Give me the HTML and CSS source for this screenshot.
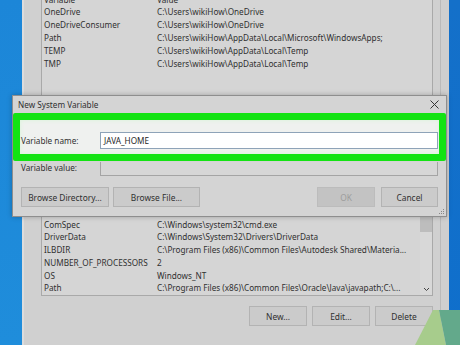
FILE: index.html
```html
<!DOCTYPE html>
<html lang="en">

<head>
    <meta charset="UTF-8">
    <meta name="viewport" content="width=device-width, initial-scale=1.0">
    <title>New System Variable</title>
    <link rel="stylesheet" href="styles.css">
</head>

<body>
    <div class="screen">
        <div class="desk-left"></div>

        <!-- Environment Variables window behind the dialog -->
        <div class="env-window">
            <div class="var-list top-list">
                <div class="row"><span class="name">Variable</span><span class="value">Value</span></div>
                <div class="row"><span class="name">OneDrive</span><span class="value">C:\Users\wikiHow\OneDrive</span></div>
                <div class="row"><span class="name">OneDriveConsumer</span><span class="value">C:\Users\wikiHow\OneDrive</span></div>
                <div class="row"><span class="name">Path</span><span class="value">C:\Users\wikiHow\AppData\Local\Microsoft\WindowsApps;</span></div>
                <div class="row"><span class="name">TEMP</span><span class="value">C:\Users\wikiHow\AppData\Local\Temp</span></div>
                <div class="row"><span class="name">TMP</span><span class="value">C:\Users\wikiHow\AppData\Local\Temp</span></div>
            </div>

            <div class="var-list bottom-list">
                <div class="rows">
                    <div class="row"><span class="name">ComSpec</span><span class="value">C:\Windows\system32\cmd.exe</span></div>
                    <div class="row"><span class="name">DriverData</span><span class="value">C:\Windows\System32\Drivers\DriverData</span></div>
                    <div class="row"><span class="name">ILBDIR</span><span class="value">C:\Program Files (x86)\Common Files\Autodesk Shared\Materia...</span></div>
                    <div class="row"><span class="name">NUMBER_OF_PROCESSORS</span><span class="value">2</span></div>
                    <div class="row"><span class="name">OS</span><span class="value">Windows_NT</span></div>
                    <div class="row"><span class="name">Path</span><span class="value">C:\Program Files (x86)\Common Files\Oracle\Java\javapath;C:\...</span></div>
                </div>
                <div class="scrollbar">
                    <div class="thumb"></div>
                    <svg class="arrow" width="7" height="5" viewBox="0 0 7 5">
                        <path d="M1 1 L3.5 3.5 L6 1" fill="none" stroke="#444" stroke-width="1"/>
                    </svg>
                </div>
            </div>

            <div class="list-buttons">
                <button class="win-btn">New...</button>
                <button class="win-btn">Edit...</button>
                <button class="win-btn">Delete</button>
            </div>
        </div>

        <div class="desk-right"></div>

        <!-- New System Variable dialog -->
        <div class="dialog">
            <div class="title-bar">
                <span>New System Variable</span>
                <svg class="close" width="9" height="9" viewBox="0 0 9 9">
                    <path d="M0.5 0.5 L8.5 8.5 M8.5 0.5 L0.5 8.5" stroke="#333" stroke-width="1"/>
                </svg>
            </div>
            <div class="highlight">
                <label class="field-label">Variable name:</label>
                <div class="field name-field">JAVA_HOME</div>
            </div>
            <div class="field-row">
                <label class="field-label">Variable value:</label>
                <div class="field value-field"></div>
            </div>
            <div class="dialog-buttons">
                <button class="win-btn browse-dir">Browse Directory...</button>
                <button class="win-btn browse-file">Browse File...</button>
                <span class="spacer"></span>
                <button class="win-btn ok" disabled>OK</button>
                <button class="win-btn cancel">Cancel</button>
            </div>
            <svg class="grip" width="6" height="6" viewBox="0 0 6 6">
                <rect x="4" y="0" width="1" height="1" fill="#888"/>
                <rect x="2" y="2" width="1" height="1" fill="#888"/>
                <rect x="4" y="2" width="1" height="1" fill="#888"/>
                <rect x="0" y="4" width="1" height="1" fill="#888"/>
                <rect x="2" y="4" width="1" height="1" fill="#888"/>
                <rect x="4" y="4" width="1" height="1" fill="#888"/>
            </svg>
        </div>

        <!-- wallpaper corner -->
        <svg class="wallpaper" width="46" height="35" viewBox="0 0 46 35">
            <polygon points="19,0 25,0 32,35 1,35" fill="#a7cc8c"/>
            <polygon points="25,0 46,0 46,35 32,35" fill="#63a98b"/>
        </svg>
    </div>
</body>

</html>
```

FILE: styles.css
```css
body {
    margin: 0;
    font-family: 'Noto Sans', 'Open Sans', sans-serif;
    font-size: 8.2px;
    color: #303030;
}

.screen {
    position: relative;
    width: 460px;
    height: 345px;
    overflow: hidden;
    display: flex;
}

.desk-left {
    width: 24px;
    background: linear-gradient(to bottom, #1c86d8, #1f8ddb);
}

.desk-right {
    flex: 1;
    background: linear-gradient(to bottom, #1470c9, #0f6fcc);
}

.env-window {
    width: 392px;
    padding: 0 16px 0 17px;
    border-left: 2px solid #dcdcdc;
    margin-left: -2px;
    background: linear-gradient(to left, #cfcfcf 8px, #bababa 8px, #bababa 9px, #d0d0d0 9px);
    display: flex;
    flex-direction: column;
}

.var-list {
    border: 1px solid #a9a9a9;
    background: #d5d5d5;
}

.top-list {
    margin-top: -7.5px;
    height: 135px;
    padding-left: 2px;
}

.row {
    display: flex;
    height: 12.9px;
    line-height: 12.9px;
    white-space: nowrap;
}

.name {
    width: 113px;
}

.bottom-list {
    margin-top: 50px;
    display: flex;
}

.bottom-list .rows {
    flex: 1;
    padding: 38px 0 0 2px;
    overflow: hidden;
}

.bottom-list .row {
    height: 12.8px;
    line-height: 12.8px;
}

.scrollbar {
    width: 12px;
    display: flex;
    flex-direction: column;
    align-items: center;
    justify-content: space-between;
    background: #d8d8d8;
}

.thumb {
    width: 12px;
    height: 51px;
    background: #bdbdbd;
}

.arrow {
    margin-bottom: 3px;
}

.list-buttons {
    display: flex;
    justify-content: flex-end;
    gap: 5px;
    margin-top: 10px;
}

.win-btn {
    font-family: inherit;
    font-size: 8.4px;
    color: #303030;
    background: #cbcbcb;
    border: 1px solid #b3b3b3;
    height: 20px;
    padding: 0;
}

.list-buttons .win-btn {
    width: 58px;
}

.dialog {
    position: absolute;
    left: 12px;
    top: 95px;
    width: 433px;
    height: 120px;
    border: 1px solid #8e8e8e;
    background: #d4d4d4;
    box-shadow: 0 0 5px rgba(0, 0, 0, 0.25);
    display: flex;
    flex-direction: column;
}

.title-bar {
    height: 17px;
    display: flex;
    align-items: center;
    justify-content: space-between;
    padding: 0 7px 0 5px;
}

.close {
    margin-top: -1px;
}

.highlight {
    height: 48px;
    box-sizing: border-box;
    border: 7px solid #13e313;
    border-radius: 2px;
    background: #eff1ef;
    box-shadow: inset 0 0 4px #d8f5d8;
    display: flex;
    align-items: flex-start;
    padding: 12px 1px 0 1px;
}

.field-label {
    width: 79px;
    line-height: 17px;
}

.field {
    flex: 1;
    height: 17px;
    box-sizing: border-box;
    border: 1px solid #8ea3b8;
    background: #fff;
    padding-left: 3px;
    line-height: 15px;
    color: #1e1e1e;
}

.field-row {
    display: flex;
    padding: 0 8px;
    margin-top: 1px;
}

.field-row .field-label {
    line-height: 11px;
}

.value-field {
    height: 14px;
    border-top: none;
    border-color: #a4a4a4;
    background: #d6d6d6;
}

.dialog-buttons {
    display: flex;
    padding: 0 8px;
    margin-top: 11px;
    gap: 4px;
}

.spacer {
    flex: 1;
}

.browse-dir {
    width: 88px;
}

.browse-file {
    width: 87px;
}

.ok {
    width: 58px;
    background: #c3c3c3;
    color: #9d9d9d;
    border-color: #bcbcbc;
    margin-right: 2px;
}

.cancel {
    width: 57px;
}

.grip {
    position: absolute;
    right: 1px;
    bottom: 1px;
}

.wallpaper {
    position: absolute;
    right: 0;
    bottom: 0;
}
```
